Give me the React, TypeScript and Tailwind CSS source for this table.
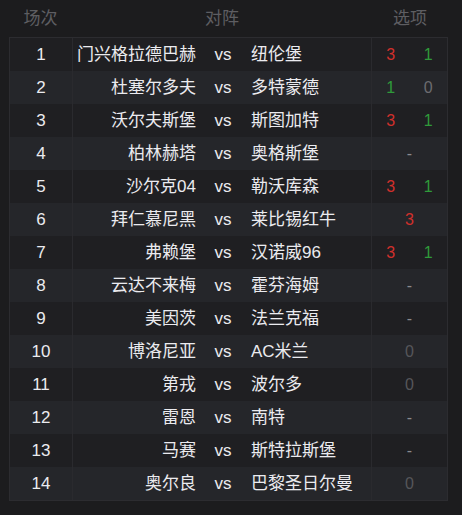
import React from 'react';

type Match = {
  no: number;
  home: string;
  away: string;
  picks: string[];
};

const matches: Match[] = [
  { no: 1, home: '门兴格拉德巴赫', away: '纽伦堡', picks: ['3', '1'] },
  { no: 2, home: '杜塞尔多夫', away: '多特蒙德', picks: ['1', '0'] },
  { no: 3, home: '沃尔夫斯堡', away: '斯图加特', picks: ['3', '1'] },
  { no: 4, home: '柏林赫塔', away: '奥格斯堡', picks: ['-'] },
  { no: 5, home: '沙尔克04', away: '勒沃库森', picks: ['3', '1'] },
  { no: 6, home: '拜仁慕尼黑', away: '莱比锡红牛', picks: ['3'] },
  { no: 7, home: '弗赖堡', away: '汉诺威96', picks: ['3', '1'] },
  { no: 8, home: '云达不来梅', away: '霍芬海姆', picks: ['-'] },
  { no: 9, home: '美因茨', away: '法兰克福', picks: ['-'] },
  { no: 10, home: '博洛尼亚', away: 'AC米兰', picks: ['0'] },
  { no: 11, home: '第戎', away: '波尔多', picks: ['0'] },
  { no: 12, home: '雷恩', away: '南特', picks: ['-'] },
  { no: 13, home: '马赛', away: '斯特拉斯堡', picks: ['-'] },
  { no: 14, home: '奥尔良', away: '巴黎圣日尔曼', picks: ['0'] },
];

const pickColor = (p: string, pair: boolean) => {
  if (p === '-') return 'text-[#8a8a8e]';
  if (!pair && p === '0') return 'text-[#56565a]';
  if (p === '3') return 'text-[#d0302c]';
  if (p === '1') return 'text-[#2f9a3a]';
  return 'text-[#6c6c70]';
};

const App: React.FC = () => {
  return (
    <div
      className="h-[515px] w-[462px] bg-[#1c1c1e] text-[17px] text-[#ebebef]"
      style={{ fontFamily: '"Liberation Sans", "Noto Sans CJK SC", sans-serif' }}
    >
      <div className="ml-[9px] w-[439px]">
        <div className="grid h-[37px] grid-cols-[63px_300px_76px] items-center text-[#5e5e62]">
          <span className="text-center">场次</span>
          <span className="text-center">对阵</span>
          <span className="text-center">选项</span>
        </div>
        <div className="border border-[#2c2c30]">
          {matches.map((m, i) => (
            <div
              key={m.no}
              className={`grid h-[33px] grid-cols-[62px_300px_75px] items-center ${
                i % 2 === 0 ? 'bg-[#1f1f22]' : 'bg-[#25262a]'
              }`}
            >
              <span className="text-center">{m.no}</span>
              <div className="grid h-full grid-cols-[128px_44px_128px] items-center border-x border-[#2a2a2e]">
                <span className="whitespace-nowrap pr-[5px] text-right">{m.home}</span>
                <span className="text-center">vs</span>
                <span className="whitespace-nowrap pl-[6px]">{m.away}</span>
              </div>
              {m.picks.length === 2 ? (
                <div className="grid grid-cols-2 text-[16px]">
                  <span className={`text-center ${pickColor(m.picks[0], true)}`}>{m.picks[0]}</span>
                  <span className={`text-center ${pickColor(m.picks[1], true)}`}>{m.picks[1]}</span>
                </div>
              ) : (
                <span className={`text-center text-[16px] ${pickColor(m.picks[0], false)}`}>{m.picks[0]}</span>
              )}
            </div>
          ))}
        </div>
      </div>
    </div>
  );
};

export default App;
